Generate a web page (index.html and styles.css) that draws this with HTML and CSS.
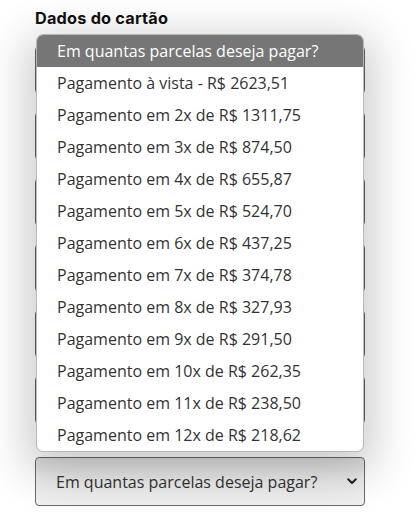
FILE: index.html
```html
<!DOCTYPE html>
<html lang="pt-BR">
<head>
<meta charset="utf-8">
<title>Dados do cartão</title>
<link rel="stylesheet" href="styles.css">
</head>
<body>
<section class="card-section">
  <h3 class="section-title">Dados do cartão</h3>
  <div class="fields">
    <div class="field"></div>
    <div class="field"></div>
    <div class="field"></div>
    <div class="field"></div>
    <div class="field"></div>
    <div class="field"></div>
    <div class="select-box">
      <span class="select-text">Em quantas parcelas deseja pagar?</span>
      <svg class="chevron" width="10" height="7" viewBox="0 0 10 7"><path d="M1.2 1.3 L5 5 L8.8 1.3" fill="none" stroke="#222" stroke-width="2" stroke-linecap="round" stroke-linejoin="round"/></svg>
    </div>
    <ul class="dropdown">
      <li class="opt opt-selected">Em quantas parcelas deseja pagar?</li>
      <li class="opt">Pagamento à vista - R$ 2623,51</li>
      <li class="opt">Pagamento em 2x de R$ 1311,75</li>
      <li class="opt">Pagamento em 3x de R$ 874,50</li>
      <li class="opt">Pagamento em 4x de R$ 655,87</li>
      <li class="opt">Pagamento em 5x de R$ 524,70</li>
      <li class="opt">Pagamento em 6x de R$ 437,25</li>
      <li class="opt">Pagamento em 7x de R$ 374,78</li>
      <li class="opt">Pagamento em 8x de R$ 327,93</li>
      <li class="opt">Pagamento em 9x de R$ 291,50</li>
      <li class="opt">Pagamento em 10x de R$ 262,35</li>
      <li class="opt">Pagamento em 11x de R$ 238,50</li>
      <li class="opt">Pagamento em 12x de R$ 218,62</li>
    </ul>
  </div>
</section>
</body>
</html>
```

FILE: styles.css
```css
html, body {
  margin: 0;
  padding: 0;
  background: #ffffff;
}
body {
  width: 417px;
  height: 531px;
  overflow: hidden;
  font-family: "Open Sans", "Noto Sans", sans-serif;
}
.card-section {
  padding: 8px 0 0 35px;
  width: 330px;
}
.section-title {
  margin: 0;
  height: 26px;
  font-family: Inter, "Noto Sans", sans-serif;
  font-weight: 700;
  font-size: 16.3px;
  line-height: 20px;
  color: #111;
  letter-spacing: 0.2px;
}
.fields {
  position: relative;
  display: flex;
  flex-direction: column;
  gap: 18px;
  padding-top: 12px;
}
.field {
  height: 46px;
  border: 1px solid #666;
  border-radius: 4px;
  background: #fff;
}
.select-box {
  margin-top: 15px;
  height: 47px;
  border: 1px solid #6a6a6a;
  border-radius: 4px;
  background: linear-gradient(180deg, #dcdcdc 0%, #ececec 45%, #f0f0f0 100%);
  display: flex;
  align-items: center;
  justify-content: space-between;
  padding: 0 7px 0 20px;
  box-sizing: content-box;
  width: 301px;
}
.select-text {
  font-size: 16px;
  color: #333;
}
.chevron {
  display: block;
}
.dropdown {
  position: absolute;
  top: 0;
  left: 1px;
  width: 326px;
  margin: 0;
  padding: 0;
  list-style: none;
  background: #fff;
  border: 1px solid #b8b8b8;
  border-radius: 7px;
  overflow: hidden;
  box-shadow: 0 12px 44px 10px rgba(0, 0, 0, 0.2);
}
.opt {
  height: 32px;
  line-height: 32px;
  padding-left: 20px;
  font-size: 16px;
  color: #333;
  white-space: nowrap;
}
.opt-selected {
  height: 32px;
  background: #767676;
  color: #fff;
}
```
